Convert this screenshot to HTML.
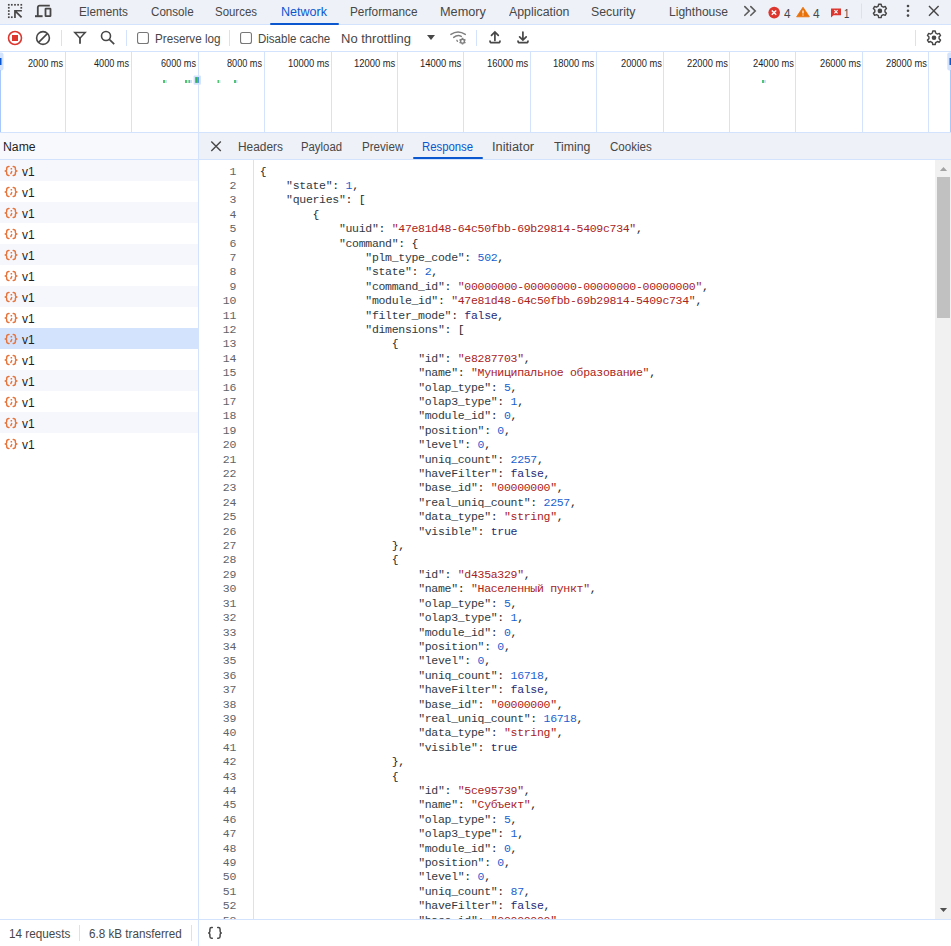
<!DOCTYPE html>
<html><head><meta charset="utf-8"><title>DevTools</title>
<style>
html,body{margin:0;padding:0;width:951px;height:946px;overflow:hidden;background:#fff;position:relative}
.t{position:absolute;white-space:nowrap;transform-origin:0 0;font-family:"Liberation Sans",sans-serif;line-height:14px}
pre{margin:0;position:absolute;font-family:"Liberation Mono",monospace;font-size:11.5px;letter-spacing:-0.3px;line-height:14.4px}
.gut{text-align:right;color:#5f6368}
.code{color:#1f1f1f}
.k{color:#303942} .s{color:#aa231c} .n{color:#1a5fd0} .a{color:#1f2a78}
</style></head><body>
<div style="position:absolute;left:0;top:0;width:951px;height:24px;background:#eef1f8"></div>
<div style="position:absolute;left:0;top:24px;width:951px;height:1px;background:#d3e3fd"></div>
<svg style="position:absolute;left:0;top:0" width="60" height="24" viewBox="0 0 60 24">
<rect x="7.95" y="3.95" width="1.7" height="1.7" fill="#474747"/><rect x="10.95" y="3.95" width="1.7" height="1.7" fill="#474747"/><rect x="14.15" y="3.95" width="1.7" height="1.7" fill="#474747"/><rect x="17.25" y="3.95" width="1.7" height="1.7" fill="#474747"/><rect x="20.45" y="3.95" width="1.7" height="1.7" fill="#474747"/><rect x="7.95" y="6.95" width="1.7" height="1.7" fill="#474747"/><rect x="20.45" y="6.95" width="1.7" height="1.7" fill="#474747"/><rect x="7.95" y="10.15" width="1.7" height="1.7" fill="#474747"/><rect x="7.95" y="13.25" width="1.7" height="1.7" fill="#474747"/><rect x="7.95" y="16.35" width="1.7" height="1.7" fill="#474747"/><rect x="10.95" y="16.35" width="1.7" height="1.7" fill="#474747"/>
<path d="M14.1 10.75 H21.9 M14.95 10 V17.9 M15.3 11.1 L21.6 17.4" fill="none" stroke="#474747" stroke-width="1.7"/>
<g fill="none" stroke="#474747" stroke-width="1.8">
<path d="M37.8 16 V7.6 Q37.8 5.7 39.7 5.7 H49.8"/>
<path d="M35 16.2 H42.6" stroke-width="2"/>
<rect x="45.5" y="8.6" width="5" height="7.6" rx="0.4"/>
</g>
<rect x="61" y="3" width="1" height="16" fill="#d3e3fd"/>
</svg>
<div class="t" style="left:78.8px;top:5.0px;font-size:12px;color:#474747;transform:scaleX(0.9777);font-family:'Liberation Sans';">Elements</div>
<div class="t" style="left:150.6px;top:5.0px;font-size:12px;color:#474747;transform:scaleX(0.9682);font-family:'Liberation Sans';">Console</div>
<div class="t" style="left:215.4px;top:5.0px;font-size:12px;color:#474747;transform:scaleX(0.9535);font-family:'Liberation Sans';">Sources</div>
<div class="t" style="left:280.6px;top:5.0px;font-size:12px;color:#0b57d0;transform:scaleX(1.0444);font-family:'Liberation Sans';">Network</div>
<div class="t" style="left:349.5px;top:5.0px;font-size:12px;color:#474747;transform:scaleX(0.9822);font-family:'Liberation Sans';">Performance</div>
<div class="t" style="left:439.6px;top:5.0px;font-size:12px;color:#474747;transform:scaleX(1.0597);font-family:'Liberation Sans';">Memory</div>
<div class="t" style="left:508.6px;top:5.0px;font-size:12px;color:#474747;transform:scaleX(1.0293);font-family:'Liberation Sans';">Application</div>
<div class="t" style="left:591.0px;top:5.0px;font-size:12px;color:#474747;transform:scaleX(1.0263);font-family:'Liberation Sans';">Security</div>
<div class="t" style="left:668.8px;top:5.0px;font-size:12px;color:#474747;transform:scaleX(1.0055);font-family:'Liberation Sans';">Lighthouse</div>
<div style="position:absolute;left:270px;top:23px;width:69px;height:2px;background:#0b57d0;border-radius:1px"></div>
<svg style="position:absolute;left:735px;top:0" width="216" height="24" viewBox="735 0 216 24">
<path d="M744.8 6.6 L749.2 11 L744.8 15.3 M750.8 6.6 L755.2 11 L750.8 15.3" fill="none" stroke="#5a5a5a" stroke-width="1.6" stroke-linecap="round"/>
<circle cx="774.2" cy="12.6" r="5.8" fill="#dc362e"/>
<path d="M771.8 10.4 L776.2 14.8 M776.2 10.4 L771.8 14.8" stroke="#fff" stroke-width="1.4"/>
<path d="M803 7.2 L809.4 16.8 H796.6 Z" fill="#e8710a" stroke="#e8710a" stroke-width="0.8" stroke-linejoin="round"/>
<path d="M803 10.5 V13.5 M803 14.6 V15.6" stroke="#fff" stroke-width="1.2"/>
<path d="M831 8.4 H841 V15.2 H833.5 L831 17.4 Z" fill="#dc362e"/>
<path d="M834.4 10.2 L837.6 13.4 M837.6 10.2 L834.4 13.4" stroke="#fff" stroke-width="1.1"/>
<rect x="861" y="3.5" width="1" height="15" fill="#d3e3fd"/>
<g transform="translate(879.9 10.9) scale(0.96)"><path d="M-1.3 -7 H1.3 L1.7 -5 L3.6 -3.9 L5.5 -4.6 L6.8 -2.4 L5.3 -1 V1 L6.8 2.4 L5.5 4.6 L3.6 3.9 L1.7 5 L1.3 7 H-1.3 L-1.7 5 L-3.6 3.9 L-5.5 4.6 L-6.8 2.4 L-5.3 1 V-1 L-6.8 -2.4 L-5.5 -4.6 L-3.6 -3.9 L-1.7 -5 Z" fill="none" stroke="#474747" stroke-width="1.5" stroke-linejoin="round"/><circle r="2.4" fill="#474747"/></g>
<circle cx="908" cy="6" r="1.3" fill="#474747"/><circle cx="908" cy="10.8" r="1.3" fill="#474747"/><circle cx="908" cy="15.6" r="1.3" fill="#474747"/>
<path d="M929 6 L938.6 15.8 M938.6 6 L929 15.8" stroke="#474747" stroke-width="1.4"/>
</svg>
<div class="t" style="left:783.5px;top:6.6px;font-size:12px;color:#474747;transform:scaleX(0.9779);font-family:'Liberation Sans';">4</div>
<div class="t" style="left:812.8px;top:6.6px;font-size:12px;color:#474747;transform:scaleX(0.9923);font-family:'Liberation Sans';">4</div>
<div class="t" style="left:844.4px;top:7.1px;font-size:12px;color:#474747;transform:scaleX(0.7951);font-family:'Liberation Sans';">1</div>
<div style="position:absolute;left:0;top:51px;width:951px;height:1px;background:#d3e3fd"></div>
<svg style="position:absolute;left:0;top:25px" width="951" height="26" viewBox="0 25 951 26">
<circle cx="15" cy="38" r="6.5" fill="none" stroke="#dc362e" stroke-width="1.6"/>
<rect x="12" y="35" width="6" height="6" fill="#dc362e"/>
<circle cx="43" cy="38" r="6.4" fill="none" stroke="#474747" stroke-width="1.6"/>
<path d="M38.6 42.4 L47.4 33.6" stroke="#474747" stroke-width="1.6"/>
<rect x="61" y="30" width="1" height="16" fill="#d3e3fd"/>
<path d="M74.8 32.6 H85.2 L80 38.2 Z" fill="none" stroke="#474747" stroke-width="1.5" stroke-linejoin="miter"/>
<path d="M80 38 V43.8" stroke="#474747" stroke-width="1.8"/>
<circle cx="106" cy="36" r="4.5" fill="none" stroke="#474747" stroke-width="1.6"/>
<path d="M109.3 39.3 L114.2 44.2" stroke="#474747" stroke-width="1.7"/>
<rect x="126" y="30" width="1" height="16" fill="#d3e3fd"/>
<rect x="137.55" y="32.55" width="10.9" height="10.9" rx="2" fill="none" stroke="#777" stroke-width="1.1"/>
<rect x="229" y="30" width="1" height="16" fill="#d3e3fd"/>
<rect x="240.55" y="32.55" width="10.9" height="10.9" rx="2" fill="none" stroke="#777" stroke-width="1.1"/>
<path d="M427 35 H435 L431 40 Z" fill="#474747"/>
<g fill="none" stroke="#7f7f7f" stroke-width="1.5" stroke-linecap="round">
<path d="M450.9 34.4 Q458 29.6 465.3 34.4"/>
<path d="M453.7 37.4 Q457.6 34.4 461.3 36.4"/>
<path d="M456.9 40.3 L457.5 41.3" stroke-width="1.3"/>
</g>
<circle cx="462.5" cy="41.2" r="1.9" fill="none" stroke="#7f7f7f" stroke-width="1.4"/>
<path d="M462.50 39.20 L462.50 37.80 M460.77 40.20 L459.56 39.50 M460.77 42.20 L459.56 42.90 M462.50 43.20 L462.50 44.60 M464.23 42.20 L465.44 42.90 M464.23 40.20 L465.44 39.50" stroke="#7f7f7f" stroke-width="1.6"/>
<rect x="476" y="30" width="1" height="16" fill="#d3e3fd"/>
<path d="M494.9 40.4 V32.2 M491.5 35.4 L494.9 32 L498.3 35.4" fill="none" stroke="#474747" stroke-width="1.7" stroke-linecap="round"/>
<path d="M490.0 41.0 Q490.0 42.7 491.7 42.7 H498.3 Q500.0 42.7 500.0 41.0" fill="none" stroke="#474747" stroke-width="1.7" stroke-linecap="round"/>
<path d="M522.9 32 V40 M519.6 36.8 L522.9 40.1 L526.2 36.8" fill="none" stroke="#474747" stroke-width="1.7" stroke-linecap="round"/>
<path d="M518.0 41.0 Q518.0 42.7 519.7 42.7 H526.3 Q528.0 42.7 528.0 41.0" fill="none" stroke="#474747" stroke-width="1.7" stroke-linecap="round"/>
<rect x="915" y="30" width="1" height="16" fill="#d3e3fd"/>
<g transform="translate(934 37.8) scale(0.96)"><path d="M-1.3 -7 H1.3 L1.7 -5 L3.6 -3.9 L5.5 -4.6 L6.8 -2.4 L5.3 -1 V1 L6.8 2.4 L5.5 4.6 L3.6 3.9 L1.7 5 L1.3 7 H-1.3 L-1.7 5 L-3.6 3.9 L-5.5 4.6 L-6.8 2.4 L-5.3 1 V-1 L-6.8 -2.4 L-5.5 -4.6 L-3.6 -3.9 L-1.7 -5 Z" fill="none" stroke="#474747" stroke-width="1.5" stroke-linejoin="round"/><circle r="2.4" fill="#474747"/></g>
</svg>
<div class="t" style="left:154.7px;top:31.9px;font-size:12px;color:#474747;transform:scaleX(0.9713);font-family:'Liberation Sans';">Preserve log</div>
<div class="t" style="left:257.5px;top:31.9px;font-size:12px;color:#474747;transform:scaleX(0.9582);font-family:'Liberation Sans';">Disable cache</div>
<div class="t" style="left:340.5px;top:31.9px;font-size:12px;color:#474747;transform:scaleX(1.0826);font-family:'Liberation Sans';">No throttling</div>
<div style="position:absolute;left:0;top:132px;width:951px;height:1px;background:#d3e3fd"></div>
<svg style="position:absolute;left:0;top:52px" width="951" height="80" viewBox="0 52 951 80">
<rect x="65" y="52" width="1" height="80" fill="#d3e3fd"/>
<rect x="131" y="52" width="1" height="80" fill="#d3e3fd"/>
<rect x="198" y="52" width="1" height="80" fill="#d3e3fd"/>
<rect x="264" y="52" width="1" height="80" fill="#d3e3fd"/>
<rect x="331" y="52" width="1" height="80" fill="#d3e3fd"/>
<rect x="397" y="52" width="1" height="80" fill="#d3e3fd"/>
<rect x="463" y="52" width="1" height="80" fill="#d3e3fd"/>
<rect x="530" y="52" width="1" height="80" fill="#d3e3fd"/>
<rect x="596" y="52" width="1" height="80" fill="#d3e3fd"/>
<rect x="663" y="52" width="1" height="80" fill="#d3e3fd"/>
<rect x="729" y="52" width="1" height="80" fill="#d3e3fd"/>
<rect x="795" y="52" width="1" height="80" fill="#d3e3fd"/>
<rect x="862" y="52" width="1" height="80" fill="#d3e3fd"/>
<rect x="928" y="52" width="1" height="80" fill="#d3e3fd"/>
<rect x="-3" y="52.5" width="6.5" height="18" rx="2" fill="#d3e3fd"/><rect x="0" y="58" width="1.5" height="7" fill="#0b57d0"/><rect x="0" y="70" width="1" height="62" fill="#a8c7fa"/>
<rect x="947.3" y="52.5" width="8" height="18" rx="2" fill="#d3e3fd"/><rect x="949.5" y="58" width="2" height="7" fill="#0b57d0"/><rect x="950" y="70" width="1" height="62" fill="#a8c7fa"/>
<rect x="163" y="80" width="2" height="3" fill="#52c472"/><rect x="165" y="80" width="2" height="3" fill="#cfe0fc"/>
<rect x="185" y="80" width="2" height="3" fill="#52c472"/><rect x="187" y="80" width="1.5" height="3" fill="#cfe0fc"/>
<rect x="188.5" y="80" width="1.5" height="3" fill="#52c472"/><rect x="190.0" y="80" width="2" height="3" fill="#cfe0fc"/>
<rect x="217.5" y="80" width="1.5" height="3" fill="#52c472"/><rect x="219.0" y="80" width="1.5" height="3" fill="#cfe0fc"/>
<rect x="234" y="80" width="2" height="3" fill="#52c472"/><rect x="236" y="80" width="1.5" height="3" fill="#cfe0fc"/>
<rect x="762" y="80" width="2" height="3" fill="#52c472"/><rect x="764" y="80" width="2" height="3" fill="#cfe0fc"/>
<rect x="193.6" y="75.5" width="7.3" height="9.2" rx="1" fill="#d3e3fd"/><rect x="195.2" y="77.1" width="2" height="5.8" fill="#34b35a"/><rect x="197.2" y="77.1" width="1.8" height="5.8" fill="#4a8ef0"/>
</svg>
<div class="t" style="left:28.0px;top:57.0px;font-size:10px;color:#1f1f1f;transform:scaleX(0.9132);font-family:'Liberation Sans';">2000 ms</div>
<div class="t" style="left:94.0px;top:57.0px;font-size:10px;color:#1f1f1f;transform:scaleX(0.9132);font-family:'Liberation Sans';">4000 ms</div>
<div class="t" style="left:161.0px;top:57.0px;font-size:10px;color:#1f1f1f;transform:scaleX(0.9132);font-family:'Liberation Sans';">6000 ms</div>
<div class="t" style="left:227.0px;top:57.0px;font-size:10px;color:#1f1f1f;transform:scaleX(0.9132);font-family:'Liberation Sans';">8000 ms</div>
<div class="t" style="left:288.1px;top:57.0px;font-size:10px;color:#1f1f1f;transform:scaleX(0.9398);font-family:'Liberation Sans';">10000 ms</div>
<div class="t" style="left:354.1px;top:57.0px;font-size:10px;color:#1f1f1f;transform:scaleX(0.9398);font-family:'Liberation Sans';">12000 ms</div>
<div class="t" style="left:420.1px;top:57.0px;font-size:10px;color:#1f1f1f;transform:scaleX(0.9398);font-family:'Liberation Sans';">14000 ms</div>
<div class="t" style="left:487.1px;top:57.0px;font-size:10px;color:#1f1f1f;transform:scaleX(0.9398);font-family:'Liberation Sans';">16000 ms</div>
<div class="t" style="left:553.1px;top:57.0px;font-size:10px;color:#1f1f1f;transform:scaleX(0.9398);font-family:'Liberation Sans';">18000 ms</div>
<div class="t" style="left:620.6px;top:57.0px;font-size:10px;color:#1f1f1f;transform:scaleX(0.9297);font-family:'Liberation Sans';">20000 ms</div>
<div class="t" style="left:686.6px;top:57.0px;font-size:10px;color:#1f1f1f;transform:scaleX(0.9297);font-family:'Liberation Sans';">22000 ms</div>
<div class="t" style="left:752.6px;top:57.0px;font-size:10px;color:#1f1f1f;transform:scaleX(0.9297);font-family:'Liberation Sans';">24000 ms</div>
<div class="t" style="left:819.6px;top:57.0px;font-size:10px;color:#1f1f1f;transform:scaleX(0.9297);font-family:'Liberation Sans';">26000 ms</div>
<div class="t" style="left:885.6px;top:57.0px;font-size:10px;color:#1f1f1f;transform:scaleX(0.9297);font-family:'Liberation Sans';">28000 ms</div>
<div style="position:absolute;left:0;top:133px;width:198px;height:26px;background:#f8f9fd"></div>
<div style="position:absolute;left:0;top:159px;width:198px;height:1px;background:#d3e3fd"></div>
<div class="t" style="left:2.5px;top:139.8px;font-size:12px;color:#1f1f1f;transform:scaleX(1.0195);font-family:'Liberation Sans';">Name</div>
<div style="position:absolute;left:0;top:160px;width:198px;height:21px;background:#f5f7fc"></div>
<svg style="position:absolute;left:3px;top:165px" width="16" height="12" viewBox="0 0 16 12"><g fill="none" stroke="#e8743b" stroke-width="1.45" stroke-linecap="round" stroke-linejoin="round"><path d="M6 1.4 Q3.7 1.4 3.7 3.4 V4.6 Q3.7 6 2.2 6 Q3.7 6 3.7 7.4 V8.4 Q3.7 10.4 6 10.4"/><path d="M10.2 1.4 Q12.4 1.4 12.4 3.4 V4.6 Q12.4 6 13.9 6 Q12.4 6 12.4 7.4 V8.4 Q12.4 10.4 10.2 10.4"/></g><rect x="7.6" y="3.0" width="1.5" height="1.5" fill="#e8743b"/><path d="M8.7 6.6 L7.8 8.6" stroke="#e8743b" stroke-width="1.4" stroke-linecap="round"/></svg>
<div class="t" style="left:21.9px;top:165.0px;font-size:12px;color:#1f1f1f;">v1</div>
<div style="position:absolute;left:0;top:181px;width:198px;height:21px;background:#ffffff"></div>
<svg style="position:absolute;left:3px;top:186px" width="16" height="12" viewBox="0 0 16 12"><g fill="none" stroke="#e8743b" stroke-width="1.45" stroke-linecap="round" stroke-linejoin="round"><path d="M6 1.4 Q3.7 1.4 3.7 3.4 V4.6 Q3.7 6 2.2 6 Q3.7 6 3.7 7.4 V8.4 Q3.7 10.4 6 10.4"/><path d="M10.2 1.4 Q12.4 1.4 12.4 3.4 V4.6 Q12.4 6 13.9 6 Q12.4 6 12.4 7.4 V8.4 Q12.4 10.4 10.2 10.4"/></g><rect x="7.6" y="3.0" width="1.5" height="1.5" fill="#e8743b"/><path d="M8.7 6.6 L7.8 8.6" stroke="#e8743b" stroke-width="1.4" stroke-linecap="round"/></svg>
<div class="t" style="left:21.9px;top:186.0px;font-size:12px;color:#1f1f1f;">v1</div>
<div style="position:absolute;left:0;top:202px;width:198px;height:21px;background:#f5f7fc"></div>
<svg style="position:absolute;left:3px;top:207px" width="16" height="12" viewBox="0 0 16 12"><g fill="none" stroke="#e8743b" stroke-width="1.45" stroke-linecap="round" stroke-linejoin="round"><path d="M6 1.4 Q3.7 1.4 3.7 3.4 V4.6 Q3.7 6 2.2 6 Q3.7 6 3.7 7.4 V8.4 Q3.7 10.4 6 10.4"/><path d="M10.2 1.4 Q12.4 1.4 12.4 3.4 V4.6 Q12.4 6 13.9 6 Q12.4 6 12.4 7.4 V8.4 Q12.4 10.4 10.2 10.4"/></g><rect x="7.6" y="3.0" width="1.5" height="1.5" fill="#e8743b"/><path d="M8.7 6.6 L7.8 8.6" stroke="#e8743b" stroke-width="1.4" stroke-linecap="round"/></svg>
<div class="t" style="left:21.9px;top:207.0px;font-size:12px;color:#1f1f1f;">v1</div>
<div style="position:absolute;left:0;top:223px;width:198px;height:21px;background:#ffffff"></div>
<svg style="position:absolute;left:3px;top:228px" width="16" height="12" viewBox="0 0 16 12"><g fill="none" stroke="#e8743b" stroke-width="1.45" stroke-linecap="round" stroke-linejoin="round"><path d="M6 1.4 Q3.7 1.4 3.7 3.4 V4.6 Q3.7 6 2.2 6 Q3.7 6 3.7 7.4 V8.4 Q3.7 10.4 6 10.4"/><path d="M10.2 1.4 Q12.4 1.4 12.4 3.4 V4.6 Q12.4 6 13.9 6 Q12.4 6 12.4 7.4 V8.4 Q12.4 10.4 10.2 10.4"/></g><rect x="7.6" y="3.0" width="1.5" height="1.5" fill="#e8743b"/><path d="M8.7 6.6 L7.8 8.6" stroke="#e8743b" stroke-width="1.4" stroke-linecap="round"/></svg>
<div class="t" style="left:21.9px;top:228.0px;font-size:12px;color:#1f1f1f;">v1</div>
<div style="position:absolute;left:0;top:244px;width:198px;height:21px;background:#f5f7fc"></div>
<svg style="position:absolute;left:3px;top:249px" width="16" height="12" viewBox="0 0 16 12"><g fill="none" stroke="#e8743b" stroke-width="1.45" stroke-linecap="round" stroke-linejoin="round"><path d="M6 1.4 Q3.7 1.4 3.7 3.4 V4.6 Q3.7 6 2.2 6 Q3.7 6 3.7 7.4 V8.4 Q3.7 10.4 6 10.4"/><path d="M10.2 1.4 Q12.4 1.4 12.4 3.4 V4.6 Q12.4 6 13.9 6 Q12.4 6 12.4 7.4 V8.4 Q12.4 10.4 10.2 10.4"/></g><rect x="7.6" y="3.0" width="1.5" height="1.5" fill="#e8743b"/><path d="M8.7 6.6 L7.8 8.6" stroke="#e8743b" stroke-width="1.4" stroke-linecap="round"/></svg>
<div class="t" style="left:21.9px;top:249.0px;font-size:12px;color:#1f1f1f;">v1</div>
<div style="position:absolute;left:0;top:265px;width:198px;height:21px;background:#ffffff"></div>
<svg style="position:absolute;left:3px;top:270px" width="16" height="12" viewBox="0 0 16 12"><g fill="none" stroke="#e8743b" stroke-width="1.45" stroke-linecap="round" stroke-linejoin="round"><path d="M6 1.4 Q3.7 1.4 3.7 3.4 V4.6 Q3.7 6 2.2 6 Q3.7 6 3.7 7.4 V8.4 Q3.7 10.4 6 10.4"/><path d="M10.2 1.4 Q12.4 1.4 12.4 3.4 V4.6 Q12.4 6 13.9 6 Q12.4 6 12.4 7.4 V8.4 Q12.4 10.4 10.2 10.4"/></g><rect x="7.6" y="3.0" width="1.5" height="1.5" fill="#e8743b"/><path d="M8.7 6.6 L7.8 8.6" stroke="#e8743b" stroke-width="1.4" stroke-linecap="round"/></svg>
<div class="t" style="left:21.9px;top:270.0px;font-size:12px;color:#1f1f1f;">v1</div>
<div style="position:absolute;left:0;top:286px;width:198px;height:21px;background:#f5f7fc"></div>
<svg style="position:absolute;left:3px;top:291px" width="16" height="12" viewBox="0 0 16 12"><g fill="none" stroke="#e8743b" stroke-width="1.45" stroke-linecap="round" stroke-linejoin="round"><path d="M6 1.4 Q3.7 1.4 3.7 3.4 V4.6 Q3.7 6 2.2 6 Q3.7 6 3.7 7.4 V8.4 Q3.7 10.4 6 10.4"/><path d="M10.2 1.4 Q12.4 1.4 12.4 3.4 V4.6 Q12.4 6 13.9 6 Q12.4 6 12.4 7.4 V8.4 Q12.4 10.4 10.2 10.4"/></g><rect x="7.6" y="3.0" width="1.5" height="1.5" fill="#e8743b"/><path d="M8.7 6.6 L7.8 8.6" stroke="#e8743b" stroke-width="1.4" stroke-linecap="round"/></svg>
<div class="t" style="left:21.9px;top:291.0px;font-size:12px;color:#1f1f1f;">v1</div>
<div style="position:absolute;left:0;top:307px;width:198px;height:21px;background:#ffffff"></div>
<svg style="position:absolute;left:3px;top:312px" width="16" height="12" viewBox="0 0 16 12"><g fill="none" stroke="#e8743b" stroke-width="1.45" stroke-linecap="round" stroke-linejoin="round"><path d="M6 1.4 Q3.7 1.4 3.7 3.4 V4.6 Q3.7 6 2.2 6 Q3.7 6 3.7 7.4 V8.4 Q3.7 10.4 6 10.4"/><path d="M10.2 1.4 Q12.4 1.4 12.4 3.4 V4.6 Q12.4 6 13.9 6 Q12.4 6 12.4 7.4 V8.4 Q12.4 10.4 10.2 10.4"/></g><rect x="7.6" y="3.0" width="1.5" height="1.5" fill="#e8743b"/><path d="M8.7 6.6 L7.8 8.6" stroke="#e8743b" stroke-width="1.4" stroke-linecap="round"/></svg>
<div class="t" style="left:21.9px;top:312.0px;font-size:12px;color:#1f1f1f;">v1</div>
<div style="position:absolute;left:0;top:328px;width:198px;height:21px;background:#d3e3fd"></div>
<svg style="position:absolute;left:3px;top:333px" width="16" height="12" viewBox="0 0 16 12"><g fill="none" stroke="#e8743b" stroke-width="1.45" stroke-linecap="round" stroke-linejoin="round"><path d="M6 1.4 Q3.7 1.4 3.7 3.4 V4.6 Q3.7 6 2.2 6 Q3.7 6 3.7 7.4 V8.4 Q3.7 10.4 6 10.4"/><path d="M10.2 1.4 Q12.4 1.4 12.4 3.4 V4.6 Q12.4 6 13.9 6 Q12.4 6 12.4 7.4 V8.4 Q12.4 10.4 10.2 10.4"/></g><rect x="7.6" y="3.0" width="1.5" height="1.5" fill="#e8743b"/><path d="M8.7 6.6 L7.8 8.6" stroke="#e8743b" stroke-width="1.4" stroke-linecap="round"/></svg>
<div class="t" style="left:21.9px;top:333.0px;font-size:12px;color:#1f1f1f;">v1</div>
<div style="position:absolute;left:0;top:349px;width:198px;height:21px;background:#ffffff"></div>
<svg style="position:absolute;left:3px;top:354px" width="16" height="12" viewBox="0 0 16 12"><g fill="none" stroke="#e8743b" stroke-width="1.45" stroke-linecap="round" stroke-linejoin="round"><path d="M6 1.4 Q3.7 1.4 3.7 3.4 V4.6 Q3.7 6 2.2 6 Q3.7 6 3.7 7.4 V8.4 Q3.7 10.4 6 10.4"/><path d="M10.2 1.4 Q12.4 1.4 12.4 3.4 V4.6 Q12.4 6 13.9 6 Q12.4 6 12.4 7.4 V8.4 Q12.4 10.4 10.2 10.4"/></g><rect x="7.6" y="3.0" width="1.5" height="1.5" fill="#e8743b"/><path d="M8.7 6.6 L7.8 8.6" stroke="#e8743b" stroke-width="1.4" stroke-linecap="round"/></svg>
<div class="t" style="left:21.9px;top:354.0px;font-size:12px;color:#1f1f1f;">v1</div>
<div style="position:absolute;left:0;top:370px;width:198px;height:21px;background:#f5f7fc"></div>
<svg style="position:absolute;left:3px;top:375px" width="16" height="12" viewBox="0 0 16 12"><g fill="none" stroke="#e8743b" stroke-width="1.45" stroke-linecap="round" stroke-linejoin="round"><path d="M6 1.4 Q3.7 1.4 3.7 3.4 V4.6 Q3.7 6 2.2 6 Q3.7 6 3.7 7.4 V8.4 Q3.7 10.4 6 10.4"/><path d="M10.2 1.4 Q12.4 1.4 12.4 3.4 V4.6 Q12.4 6 13.9 6 Q12.4 6 12.4 7.4 V8.4 Q12.4 10.4 10.2 10.4"/></g><rect x="7.6" y="3.0" width="1.5" height="1.5" fill="#e8743b"/><path d="M8.7 6.6 L7.8 8.6" stroke="#e8743b" stroke-width="1.4" stroke-linecap="round"/></svg>
<div class="t" style="left:21.9px;top:375.0px;font-size:12px;color:#1f1f1f;">v1</div>
<div style="position:absolute;left:0;top:391px;width:198px;height:21px;background:#ffffff"></div>
<svg style="position:absolute;left:3px;top:396px" width="16" height="12" viewBox="0 0 16 12"><g fill="none" stroke="#e8743b" stroke-width="1.45" stroke-linecap="round" stroke-linejoin="round"><path d="M6 1.4 Q3.7 1.4 3.7 3.4 V4.6 Q3.7 6 2.2 6 Q3.7 6 3.7 7.4 V8.4 Q3.7 10.4 6 10.4"/><path d="M10.2 1.4 Q12.4 1.4 12.4 3.4 V4.6 Q12.4 6 13.9 6 Q12.4 6 12.4 7.4 V8.4 Q12.4 10.4 10.2 10.4"/></g><rect x="7.6" y="3.0" width="1.5" height="1.5" fill="#e8743b"/><path d="M8.7 6.6 L7.8 8.6" stroke="#e8743b" stroke-width="1.4" stroke-linecap="round"/></svg>
<div class="t" style="left:21.9px;top:396.0px;font-size:12px;color:#1f1f1f;">v1</div>
<div style="position:absolute;left:0;top:412px;width:198px;height:21px;background:#f5f7fc"></div>
<svg style="position:absolute;left:3px;top:417px" width="16" height="12" viewBox="0 0 16 12"><g fill="none" stroke="#e8743b" stroke-width="1.45" stroke-linecap="round" stroke-linejoin="round"><path d="M6 1.4 Q3.7 1.4 3.7 3.4 V4.6 Q3.7 6 2.2 6 Q3.7 6 3.7 7.4 V8.4 Q3.7 10.4 6 10.4"/><path d="M10.2 1.4 Q12.4 1.4 12.4 3.4 V4.6 Q12.4 6 13.9 6 Q12.4 6 12.4 7.4 V8.4 Q12.4 10.4 10.2 10.4"/></g><rect x="7.6" y="3.0" width="1.5" height="1.5" fill="#e8743b"/><path d="M8.7 6.6 L7.8 8.6" stroke="#e8743b" stroke-width="1.4" stroke-linecap="round"/></svg>
<div class="t" style="left:21.9px;top:417.0px;font-size:12px;color:#1f1f1f;">v1</div>
<div style="position:absolute;left:0;top:433px;width:198px;height:21px;background:#ffffff"></div>
<svg style="position:absolute;left:3px;top:438px" width="16" height="12" viewBox="0 0 16 12"><g fill="none" stroke="#e8743b" stroke-width="1.45" stroke-linecap="round" stroke-linejoin="round"><path d="M6 1.4 Q3.7 1.4 3.7 3.4 V4.6 Q3.7 6 2.2 6 Q3.7 6 3.7 7.4 V8.4 Q3.7 10.4 6 10.4"/><path d="M10.2 1.4 Q12.4 1.4 12.4 3.4 V4.6 Q12.4 6 13.9 6 Q12.4 6 12.4 7.4 V8.4 Q12.4 10.4 10.2 10.4"/></g><rect x="7.6" y="3.0" width="1.5" height="1.5" fill="#e8743b"/><path d="M8.7 6.6 L7.8 8.6" stroke="#e8743b" stroke-width="1.4" stroke-linecap="round"/></svg>
<div class="t" style="left:21.9px;top:438.0px;font-size:12px;color:#1f1f1f;">v1</div>
<div style="position:absolute;left:198px;top:133px;width:1px;height:813px;background:#d3e3fd"></div>
<div style="position:absolute;left:199px;top:133px;width:752px;height:26px;background:#eef1f8"></div>
<div style="position:absolute;left:199px;top:159px;width:752px;height:1px;background:#d3e3fd"></div>
<svg style="position:absolute;left:205px;top:136px" width="22" height="20" viewBox="205 136 22 20"><path d="M211.3 141.6 L220.8 151.1 M220.8 141.6 L211.3 151.1" stroke="#474747" stroke-width="1.4"/></svg>
<div class="t" style="left:237.8px;top:140.1px;font-size:12px;color:#474747;transform:scaleX(0.991);font-family:'Liberation Sans';">Headers</div>
<div class="t" style="left:301.2px;top:140.1px;font-size:12px;color:#474747;transform:scaleX(0.9453);font-family:'Liberation Sans';">Payload</div>
<div class="t" style="left:362.0px;top:140.1px;font-size:12px;color:#474747;transform:scaleX(0.9667);font-family:'Liberation Sans';">Preview</div>
<div class="t" style="left:422.0px;top:140.1px;font-size:12px;color:#0b57d0;transform:scaleX(0.9454);font-family:'Liberation Sans';">Response</div>
<div class="t" style="left:491.8px;top:140.1px;font-size:12px;color:#474747;transform:scaleX(1.0687);font-family:'Liberation Sans';">Initiator</div>
<div class="t" style="left:553.7px;top:140.1px;font-size:12px;color:#474747;transform:scaleX(1.0231);font-family:'Liberation Sans';">Timing</div>
<div class="t" style="left:609.7px;top:140.1px;font-size:12px;color:#474747;transform:scaleX(0.9653);font-family:'Liberation Sans';">Cookies</div>
<div style="position:absolute;left:413px;top:157px;width:70px;height:2px;background:#0b57d0;border-radius:1px"></div>
<div style="position:absolute;left:253px;top:160px;width:1px;height:759px;background:#d3e3fd"></div>
<div style="position:absolute;left:199px;top:160px;width:736px;height:759px;overflow:hidden"><pre class="gut" style="left:0;top:4.5px;width:37px">1
2
3
4
5
6
7
8
9
10
11
12
13
14
15
16
17
18
19
20
21
22
23
24
25
26
27
28
29
30
31
32
33
34
35
36
37
38
39
40
41
42
43
44
45
46
47
48
49
50
51
52
53</pre><pre class="code" style="left:60.7px;top:4.5px">{
    <span class="k">&quot;state&quot;</span>: <span class="n">1</span>,
    <span class="k">&quot;queries&quot;</span>: [
        {
            <span class="k">&quot;uuid&quot;</span>: <span class="s">&quot;47e81d48-64c50fbb-69b29814-5409c734&quot;</span>,
            <span class="k">&quot;command&quot;</span>: {
                <span class="k">&quot;plm_type_code&quot;</span>: <span class="n">502</span>,
                <span class="k">&quot;state&quot;</span>: <span class="n">2</span>,
                <span class="k">&quot;command_id&quot;</span>: <span class="s">&quot;00000000-00000000-00000000-00000000&quot;</span>,
                <span class="k">&quot;module_id&quot;</span>: <span class="s">&quot;47e81d48-64c50fbb-69b29814-5409c734&quot;</span>,
                <span class="k">&quot;filter_mode&quot;</span>: <span class="a">false</span>,
                <span class="k">&quot;dimensions&quot;</span>: [
                    {
                        <span class="k">&quot;id&quot;</span>: <span class="s">&quot;e8287703&quot;</span>,
                        <span class="k">&quot;name&quot;</span>: <span class="s">&quot;Муниципальное образование&quot;</span>,
                        <span class="k">&quot;olap_type&quot;</span>: <span class="n">5</span>,
                        <span class="k">&quot;olap3_type&quot;</span>: <span class="n">1</span>,
                        <span class="k">&quot;module_id&quot;</span>: <span class="n">0</span>,
                        <span class="k">&quot;position&quot;</span>: <span class="n">0</span>,
                        <span class="k">&quot;level&quot;</span>: <span class="n">0</span>,
                        <span class="k">&quot;uniq_count&quot;</span>: <span class="n">2257</span>,
                        <span class="k">&quot;haveFilter&quot;</span>: <span class="a">false</span>,
                        <span class="k">&quot;base_id&quot;</span>: <span class="s">&quot;00000000&quot;</span>,
                        <span class="k">&quot;real_uniq_count&quot;</span>: <span class="n">2257</span>,
                        <span class="k">&quot;data_type&quot;</span>: <span class="s">&quot;string&quot;</span>,
                        <span class="k">&quot;visible&quot;</span>: <span class="a">true</span>
                    },
                    {
                        <span class="k">&quot;id&quot;</span>: <span class="s">&quot;d435a329&quot;</span>,
                        <span class="k">&quot;name&quot;</span>: <span class="s">&quot;Населенный пункт&quot;</span>,
                        <span class="k">&quot;olap_type&quot;</span>: <span class="n">5</span>,
                        <span class="k">&quot;olap3_type&quot;</span>: <span class="n">1</span>,
                        <span class="k">&quot;module_id&quot;</span>: <span class="n">0</span>,
                        <span class="k">&quot;position&quot;</span>: <span class="n">0</span>,
                        <span class="k">&quot;level&quot;</span>: <span class="n">0</span>,
                        <span class="k">&quot;uniq_count&quot;</span>: <span class="n">16718</span>,
                        <span class="k">&quot;haveFilter&quot;</span>: <span class="a">false</span>,
                        <span class="k">&quot;base_id&quot;</span>: <span class="s">&quot;00000000&quot;</span>,
                        <span class="k">&quot;real_uniq_count&quot;</span>: <span class="n">16718</span>,
                        <span class="k">&quot;data_type&quot;</span>: <span class="s">&quot;string&quot;</span>,
                        <span class="k">&quot;visible&quot;</span>: <span class="a">true</span>
                    },
                    {
                        <span class="k">&quot;id&quot;</span>: <span class="s">&quot;5ce95739&quot;</span>,
                        <span class="k">&quot;name&quot;</span>: <span class="s">&quot;Субъект&quot;</span>,
                        <span class="k">&quot;olap_type&quot;</span>: <span class="n">5</span>,
                        <span class="k">&quot;olap3_type&quot;</span>: <span class="n">1</span>,
                        <span class="k">&quot;module_id&quot;</span>: <span class="n">0</span>,
                        <span class="k">&quot;position&quot;</span>: <span class="n">0</span>,
                        <span class="k">&quot;level&quot;</span>: <span class="n">0</span>,
                        <span class="k">&quot;uniq_count&quot;</span>: <span class="n">87</span>,
                        <span class="k">&quot;haveFilter&quot;</span>: <span class="a">false</span>,
                        <span class="k">&quot;base_id&quot;</span>: <span class="s">&quot;00000000&quot;</span>,</pre></div>
<div style="position:absolute;left:935px;top:160px;width:16px;height:759px;background:#f1f1f1"></div>
<svg style="position:absolute;left:935px;top:160px" width="16" height="759" viewBox="0 0 16 759"><path d="M4.9 10.9 H12.1 L8.5 6.9 Z" fill="#a3a3a3"/><path d="M4.9 748.0 H12.1 L8.5 752 Z" fill="#505050"/></svg>
<div style="position:absolute;left:937px;top:177px;width:13px;height:141px;background:#c1c1c1"></div>
<div style="position:absolute;left:0;top:919px;width:951px;height:1px;background:#d3e3fd"></div>
<div class="t" style="left:8.7px;top:926.9px;font-size:12px;color:#474747;transform:scaleX(0.9775);font-family:'Liberation Sans';">14 requests</div>
<div style="position:absolute;left:79px;top:925px;width:1px;height:16px;background:#d3e3fd"></div>
<div class="t" style="left:89.1px;top:926.9px;font-size:12px;color:#474747;transform:scaleX(0.9716);font-family:'Liberation Sans';">6.8 kB transferred</div>
<div style="position:absolute;left:191px;top:925px;width:1px;height:16px;background:#d3e3fd"></div>
<svg style="position:absolute;left:204px;top:925px" width="22" height="16" viewBox="204 925 22 16"><g fill="none" stroke="#474747" stroke-width="1.5" stroke-linecap="round"><path d="M212.3 927.6 H211.6 Q209.9 927.6 209.9 929.3 V931.3 Q209.9 932.9 208.2 932.9 Q209.9 932.9 209.9 934.5 V936.5 Q209.9 938.2 211.6 938.2 H212.3"/><path d="M217.7 927.6 H218.4 Q220.1 927.6 220.1 929.3 V931.3 Q220.1 932.9 221.8 932.9 Q220.1 932.9 220.1 934.5 V936.5 Q220.1 938.2 218.4 938.2 H217.7"/></g></svg>
</body></html>
